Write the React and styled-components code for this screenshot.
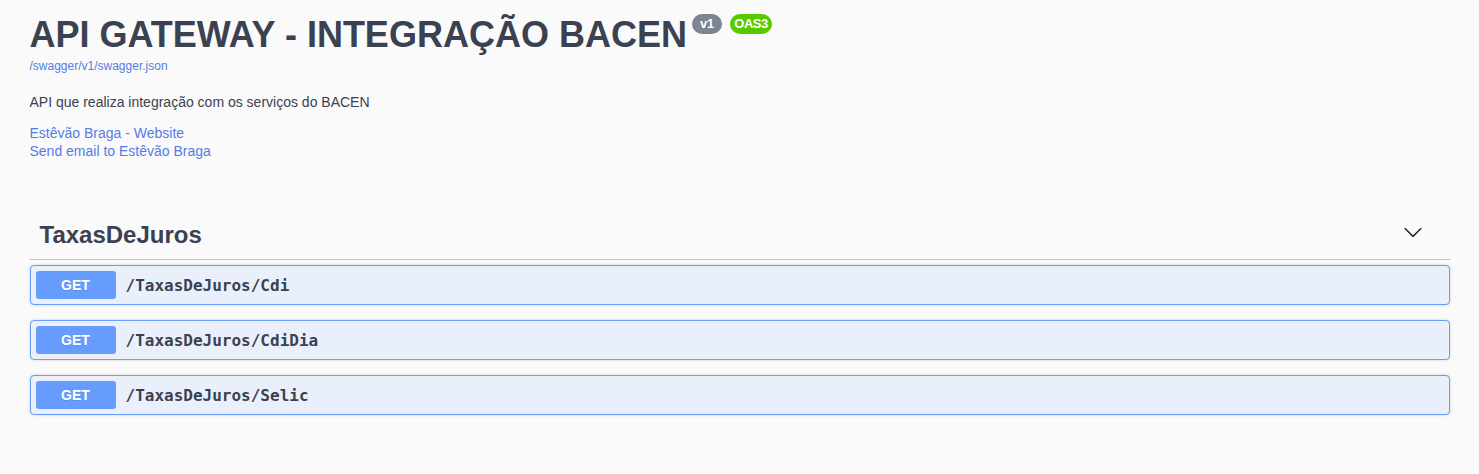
import React from "react";
import styled, { createGlobalStyle } from "styled-components";

const GlobalStyle = createGlobalStyle`
  html, body {
    margin: 0;
    padding: 0;
    background: #fafafa;
  }
  body {
    font-family: "Liberation Sans", Arial, sans-serif;
    color: #3b4151;
  }
`;

const Wrapper = styled.div`
  max-width: 1460px;
  margin: 0 auto;
  padding: 0 20px;
  box-sizing: border-box;
`;

const Info = styled.div`
  padding-top: 14px;
  margin-bottom: 51px;
`;

const TitleRow = styled.div`
  display: flex;
  align-items: flex-start;
`;

const Title = styled.h2`
  margin: 0;
  font-size: 36px;
  line-height: 41px;
  font-weight: 700;
  color: #3b4151;
`;

const Badge = styled.small`
  display: inline-block;
  margin: 0 0 0 ${({ $gap }) => $gap}px;
  padding: 2px ${({ $px }) => $px}px;
  border-radius: 57px;
  background: ${({ $bg }) => $bg};
  color: #fff;
  font-size: 13px;
  line-height: 16px;
  font-weight: 700;
  letter-spacing: ${({ $ls }) => $ls || 0}px;
`;

const SpecLink = styled.a`
  display: block;
  margin-top: 3px;
  font-size: 12px;
  line-height: 16px;
  color: #577be3;
  text-decoration: none;
`;

const Description = styled.p`
  margin: 19px 0 0;
  font-size: 14px;
  line-height: 18px;
`;

const Contact = styled.div`
  margin-top: 13px;
  display: flex;
  flex-direction: column;
`;

const ContactLink = styled.a`
  font-size: 14px;
  line-height: 18px;
  color: #577be3;
  text-decoration: none;
`;

const Tag = styled.div`
  display: flex;
  align-items: center;
  padding: 10px 27px 10px 10px;
  margin-bottom: 5px;
  border-bottom: 1px solid rgba(59, 65, 81, 0.3);
`;

const TagName = styled.h3`
  flex: 1;
  margin: 0;
  font-size: 24px;
  line-height: 28px;
  font-weight: 700;
  color: #3b4151;
`;

const ExpandButton = styled.button`
  border: none;
  background: none;
  padding: 0;
  margin-bottom: 6px;
  display: flex;
  cursor: pointer;
`;

const Opblock = styled.div`
  display: flex;
  align-items: center;
  padding: 5px;
  margin-bottom: 15px;
  border: 1px solid #689dfc;
  border-radius: 4px;
  background: #e9f0fb;
  box-shadow: 0 0 3px rgba(0, 0, 0, 0.19);
`;

const Method = styled.span`
  min-width: 80px;
  padding: 6px 0;
  border-radius: 3px;
  background: #659cfd;
  color: #fff;
  font-size: 14px;
  line-height: 16px;
  font-weight: 700;
  text-align: center;
  text-shadow: 0 1px 0 rgba(0, 0, 0, 0.1);
`;

const Path = styled.span`
  padding: 0 10px;
  font-family: "DejaVu Sans Mono", monospace;
  font-size: 16px;
  font-weight: 700;
  color: #3b4151;
`;

const endpoints = ["/TaxasDeJuros/Cdi", "/TaxasDeJuros/CdiDia", "/TaxasDeJuros/Selic"];

export default function App() {
  return (
    <>
      <GlobalStyle />
      <Wrapper>
        <Info>
          <TitleRow>
            <Title>API GATEWAY - INTEGRAÇÃO BACEN</Title>
            <Badge $bg="#7d8492" $gap={5} $px={8}>v1</Badge>
            <Badge $bg="#58c800" $gap={8} $px={4} $ls={-0.5}>OAS3</Badge>
          </TitleRow>
          <SpecLink href="#">/swagger/v1/swagger.json</SpecLink>
          <Description>API que realiza integração com os serviços do BACEN</Description>
          <Contact>
            <ContactLink href="#">Estêvão Braga - Website</ContactLink>
            <ContactLink href="#">Send email to Estêvão Braga</ContactLink>
          </Contact>
        </Info>

        <Tag>
          <TagName>TaxasDeJuros</TagName>
          <ExpandButton aria-label="collapse">
            <svg width="20" height="20" viewBox="0 0 20 20" fill="#222">
              <path d="M17.418 6.109c.272-.268.709-.268.979 0s.271.701 0 .969l-7.908 7.83c-.27.268-.707.268-.979 0l-7.908-7.83c-.27-.268-.27-.701 0-.969.271-.268.709-.268.979 0L10 13.25l7.418-7.141z" />
            </svg>
          </ExpandButton>
        </Tag>

        {endpoints.map((p) => (
          <Opblock key={p}>
            <Method>GET</Method>
            <Path>{p}</Path>
          </Opblock>
        ))}
      </Wrapper>
    </>
  );
}
